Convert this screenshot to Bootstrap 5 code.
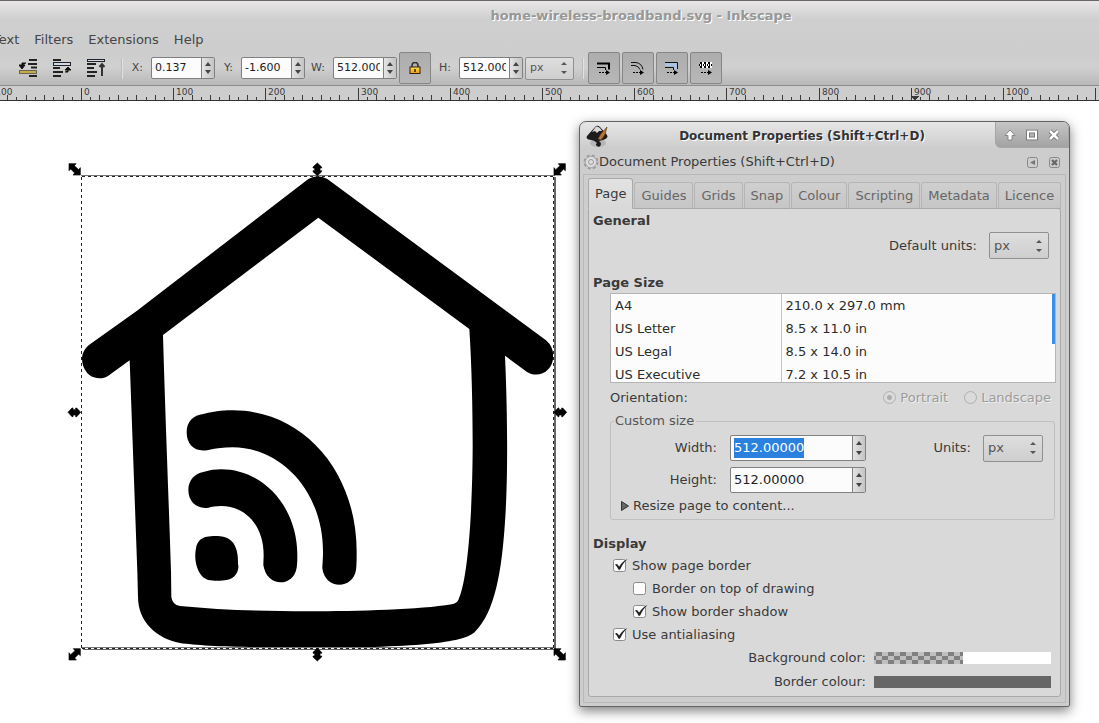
<!DOCTYPE html>
<html lang="en">
<head>
<meta charset="utf-8">
<meta name="viewport" content="width=device-width, initial-scale=1">
<title>home-wireless-broadband.svg - Inkscape</title>
<link href="https://cdn.jsdelivr.net/npm/bootstrap@5.3.0/dist/css/bootstrap.min.css" rel="stylesheet">
<style>
  body { font-family: "DejaVu Sans", sans-serif; font-size: 13px; line-height: 20px; color: #3a3a3a; background: #fff; overflow: hidden; }
  svg { display: block; }
  .chrome { border-top: 1px solid #666; background: linear-gradient(#e9e7e8 0, #cfcfcf 18px, #cdcdcd 52px, #d0d0d0 66px, #b8b8b8 84px); border-bottom: 1px solid #8c8c8c; }
  .window-title { padding: 5px 0 0 183px; height: 29px; color: #979797; font-weight: 700; text-shadow: 1px 1px 0 #fff; }
  .menus { height: 21px; margin-left: -7px; gap: 15px; }
  .menus a { color: #454545; text-decoration: none; }
  .tools { height: 34px; font-size: 11px; padding-left: 19px; }
  .tools .group { gap: 2px; }
  .tools label { text-align: right; color: #444; }
  .icon-btn { border: 0; background: none; padding: 0; width: 18px; height: 18px; }
  .tool-rule { width: 2px; height: 21px; background: linear-gradient(90deg, #bbb 50%, #e2e2e2 50%); }
  .toggle-btn { width: 32px; height: 32px; padding: 0; border: 1px solid #868686; border-radius: 2px; background: linear-gradient(#adadad, #b7b7b7); display: flex; align-items: center; justify-content: center; }
  .spin { border: 1px solid #808080; border-radius: 2px; background: #fcfcfc; overflow: hidden; height: 26px; width: 136px; }
  .spin input { border: 0; outline: 0; background: transparent; min-width: 0; width: 0; flex: 1 1 0; padding: 0 3px; color: #222; }
  .spin input::selection { background: #2a82de; color: #fff; }
  .spin .steps { width: 13px; padding: 2px 0; border-left: 1px solid #808080; background: linear-gradient(90deg, #e4e4e4, #c4c4c4); }
  .spin button { border: 0; padding: 0; background: none; flex: 1; display: flex; align-items: center; justify-content: center; }
  .tools .spin { width: 64px; height: 22px; }
  .unit-select { appearance: none; border: 1px solid #909090; border-radius: 2px; color: #555; width: 60px; height: 27px; padding: 0 4px;
    background: url("data:image/svg+xml,%3Csvg xmlns='http://www.w3.org/2000/svg' width='6' height='12'%3E%3Cpath d='M0 3L3 0L6 3zM0 9L3 12L6 9z' fill='%23555'/%3E%3C/svg%3E") no-repeat right 6px center, linear-gradient(#dedede, #cecece); }
  .tools .unit-select { width: 49px; height: 23px; }
  .ruler { height: 15px; background: #cdcdcd; border-bottom: 1px solid #333; overflow: hidden; }
  .canvas { min-height: 622px; }
  .drawing { left: 60px; top: 54px; }

  .props { right: 29px; top: 20px; width: 491px; border: 1px solid #636363; border-radius: 7px 7px 2px 2px; background: linear-gradient(#e6e6e6, #cdcdcd 26px); box-shadow: 0 4px 12px rgba(0,0,0,.5); padding: 0 3px 3px; }
  .props-title { height: 28px; margin-right: -3px; }
  .props-title strong { padding-top: 4px; font-size: 12px; text-shadow: 1px 1px 0 #fff; color: #333; }
  .win-btns { width: 74px; height: 26px; gap: 8px; border-radius: 0 6px 0 6px; background: linear-gradient(#c6c6c6, #a2a2a2); border: 1px solid #a6a6a6; border-top: 0; }
  .plain-btn { border: 0; background: none; padding: 0; color: inherit; }
  .dock-title { height: 24px; }
  .dock-frame { border: 1px solid #b9b9b9; padding: 3px 4px 5px; }
  .nav-tabs { border: 0; gap: 1px; align-items: flex-end; margin-bottom: -1px; position: relative; }
  .nav-tabs .nav-link { border: 1px solid #b5b5b5; border-radius: 3px 3px 0 0; margin: 0; padding: 3px 6px 2px; color: #666; background: linear-gradient(#cfcfcf, #c6c6c6); line-height: 20px; border-bottom-color: #a9a9a9; }
  .nav-tabs .nav-link.active { padding: 5px 6px 4px; background: linear-gradient(#e2e2e2, #d9d9d9); color: #3a3a3a; border-color: #a9a9a9 #a9a9a9 #d9d9d9; }
  .sheet { border: 1px solid #a9a9a9; border-radius: 0 3px 3px 3px; background: #d9d9d9; padding: 2px 4px; }
  .heading { font-size: 13px; line-height: 20px; font-weight: 700; margin: 0; color: #3a3a3a; }
  .heading + .units-line { padding: 1px 7px 0 0; }
  .section-gap { margin-top: 14px; }
  .sizes { margin: 0 0 3px 17px; height: 90px; border: 1px solid #b5b5b5; background: #fcfcfc; overflow: hidden; }
  .sizes table { color: #2c2c2c; width: 100%; }
  .sizes td { height: 23px; padding: 1px 4px 0; }
  .sizes td:first-child { width: 170px; border-right: 1px solid #c4c4c4; }
  .sizes .thumb { right: 0; top: 0; width: 3px; height: 50px; background: #3a8fe8; }
  .orient { margin: 0 5px 0 17px; height: 23px; }
  .off { color: #9c9c9c; text-shadow: 1px 1px 0 #eee; }
  .off input { appearance: none; width: 13px; height: 13px; margin: 0; border: 1px solid #b0b0b0; border-radius: 50%; background: #dadada; }
  .off input:checked { background: radial-gradient(#adadad 2px, #dadada 3px); }
  .custom { margin: 2px 1px 0 17px; border: 1px solid #c0c0c0; border-radius: 3px; padding: 0 11px 3px 10px; }
  .custom legend { float: none; width: auto; font-size: 13px; line-height: 20px; margin: 0 0 1px -7px; padding: 0 2px 0 1px; color: #555; }
  .custom .line { height: 32px; }
  .custom .lab { width: 109px; padding-right: 13px; text-align: right; flex: none; }
  .checks { margin-left: 20px; }
  .checks label { height: 23px; display: flex; align-items: center; gap: 4px; }
  .checks .nested { margin-left: 20px; }
  .checks input { appearance: none; width: 15px; height: 15px; margin: 0; flex: none; background: no-repeat center / 15px 15px url("data:image/svg+xml,%3Csvg xmlns='http://www.w3.org/2000/svg' viewBox='0 0 15 15'%3E%3Crect x='.5' y='1.5' width='12' height='12' rx='2' fill='%23fcfcfc' stroke='%238c8c8c'/%3E%3C/svg%3E"); }
  .checks input:checked { background-image: url("data:image/svg+xml,%3Csvg xmlns='http://www.w3.org/2000/svg' viewBox='0 0 15 15'%3E%3Crect x='.5' y='1.5' width='12' height='12' rx='2' fill='%23fcfcfc' stroke='%238c8c8c'/%3E%3Cpath d='M2 6.500L4 6L6.200 8.600C8.500 5 11 2.500 14.500 1C11 4 8.800 8 7 11.700L5.600 11.700C4.500 9.500 3.500 8 2 6.500z' fill='%23222'/%3E%3C/svg%3E"); }
  .colour-line { height: 24px; padding-right: 5px; }
  .swatch { width: 177px; height: 12px; border: 0; padding: 0; display: flex; background: #fff; }
  .swatch.solid { background: #666; }
  .swatch .checker { width: 50%; background: repeating-conic-gradient(#bfbfbf 0 25%, #808080 0 50%) 2px 0 / 12px 8px; }
</style>
</head>
<body class="d-flex flex-column min-vh-100">
<header class="chrome">
  <div class="window-title text-center">home-wireless-broadband.svg - Inkscape</div>
  <nav class="menus d-flex">
    <a href="#">Text</a><a href="#">Filters</a><a href="#">Extensions</a><a href="#">Help</a>
  </nav>
  <div class="tools d-flex align-items-center">
    <div class="d-flex gap-3">
      <button class="icon-btn" aria-label="Lower selection"><svg width="18" height="18"><path d="M10 1h8M9 5h9M12 8.500h6M10 17h8" stroke="#222" stroke-width="2"/><rect x=".5" y="11.500" width="17" height="3" fill="#c9a94a" stroke="#665"/><path d="M7 4H3v3M0 6l3 4 3-4z" stroke="#111" fill="#111"/></svg></button>
      <button class="icon-btn" aria-label="Raise selection"><svg width="18" height="18"><path d="M0 1h8M0 9h7M0 13h10M0 17h8" stroke="#222" stroke-width="2"/><rect x=".5" y="3.500" width="17" height="3" fill="#cfdbe8" stroke="#222"/><path d="M12 13h3v-2M12 11l3-3 3 3z" stroke="#111" fill="#111"/></svg></button>
      <button class="icon-btn" aria-label="Raise to top"><svg width="18" height="18"><path d="M0 5h9M0 9h7M0 13h10M0 17h8" stroke="#222" stroke-width="2"/><rect x=".5" y=".5" width="17" height="2" fill="#cfdbe8" stroke="#222"/><path d="M15 17V6M12.500 8L15 5l2.500 3" stroke="#333" stroke-width="2" fill="none"/></svg></button>
    </div>
    <span class="tool-rule ms-3 me-1"></span>
    <label for="fx" style="width:24px" class="pe-2">X:</label>
    <div class="spin d-flex"><input id="fx" value="0.137"><span class="steps d-flex flex-column"></span></div>
    <label for="fy" style="width:26px" class="pe-2">Y:</label>
    <div class="spin d-flex"><input id="fy" value="-1.600"><span class="steps d-flex flex-column"></span></div>
    <label for="fw" style="width:28px" class="pe-2">W:</label>
    <div class="spin d-flex"><input id="fw" value="512.000"><span class="steps d-flex flex-column"></span></div>
    <button class="toggle-btn" style="margin-left:2px" aria-label="Lock ratio"><svg width="12" height="12"><path d="M3 6V3.500a3 3 0 0 1 6 0V6" fill="none" stroke="#333" stroke-width="1.600"/><defs><linearGradient id="gold" x2="0" y2="1"><stop stop-color="#ffdf50"/><stop offset="1" stop-color="#f09a10"/></linearGradient></defs><rect x="1" y="5" width="10" height="6.500" fill="url(#gold)" stroke="#321"/><path d="M6 7v3" stroke="#321" stroke-width="1.500"/></svg></button>
    <label for="fh" style="width:28px" class="pe-2">H:</label>
    <div class="spin d-flex"><input id="fh" value="512.000"><span class="steps d-flex flex-column"></span></div>
    <select class="unit-select" aria-label="Unit" style="margin-left:2px"><option>px</option></select>
    <span class="tool-rule ms-2"></span>
    <div class="group d-flex ms-1">
      <button class="toggle-btn" aria-label="Scale stroke"><svg width="14" height="14"><path d="M0 2.500h12v6" fill="none" stroke="#000" stroke-width="2"/><path d="M0 6.500h8.500V9" fill="none" stroke="#000"/><path d="M2 11.500h7" stroke="#000" stroke-dasharray="2 1"/><path d="M9 9l4 2.500L9 14z"/></svg></button>
      <button class="toggle-btn" aria-label="Scale corners"><svg width="14" height="14"><path d="M0 1.500h5q6 1 7 7M0 4.500h4q4 1 5 4" fill="none" stroke="#111"/><path d="M2 11.500h7" stroke="#000" stroke-dasharray="2 1"/><path d="M9 9l4 2.500L9 14z"/></svg></button>
      <button class="toggle-btn" aria-label="Move gradients"><svg width="14" height="14"><path d="M0 1h13v7H9V5H0z" fill="#a9c4e6"/><path d="M0 1.500h12.500V8M0 6.500h8.500V9" fill="none" stroke="#111"/><path d="M2 11.500h7" stroke="#000" stroke-dasharray="2 1"/><path d="M9 9l4 2.500L9 14z"/></svg></button>
      <button class="toggle-btn" aria-label="Move patterns"><svg width="14" height="14"><path d="M1 1h12v6H1z" fill="#fff"/><path d="M1 2h12M1 6h12" stroke="#000" stroke-width="2" stroke-dasharray="2 2"/><path d="M0 4h13" stroke="#000" stroke-width="2" stroke-dasharray="1 1"/><path d="M2 11.500h7" stroke="#000" stroke-dasharray="2 1"/><path d="M9 9l4 2.500L9 14z"/></svg></button>
    </div>
  </div>
</header>
<div class="ruler"><svg id="ruler" width="100%" height="14" font-size="9" fill="#3a3a3a" shape-rendering="crispEdges"></svg></div>

<main class="canvas position-relative flex-grow-1">
  <svg class="drawing position-absolute" width="520" height="520" viewBox="0 0 1560 1560" role="img" aria-label="House with a broadband signal">
    <path fill-rule="evenodd" d="M745 72Q773 55 802 72L1458 556Q1480 575 1480 603C1479 650 1435 672 1400 650L1335 602C1342 760 1345 960 1335 1100C1325 1250 1305 1370 1245 1430C1215 1460 1100 1478 740 1478C550 1478 420 1473 360 1464C290 1450 234 1400 234 1325L232 1250L209 616L145 662C125 675 95 672 80 652C60 625 60 590 90 568L230 468ZM775 188L309 540C315 760 325 1000 333 1250L334 1325Q336 1348 360 1353C480 1365 620 1369 740 1369C900 1369 1080 1364 1175 1348Q1190 1345 1195 1335C1230 1260 1238 1000 1238 870C1238 760 1235 630 1228 522Z"/>
    <path d="M430 777C470 767 500 766 518 766C730 766 890 950 890 1190C890 1210 890 1235 888 1245C878 1305 795 1305 787 1240C787 1225 789 1215 789 1190C789 1010 665 877 518 877C490 877 470 880 445 885C405 893 380 870 380 832C380 800 400 780 430 777Z"/>
    <path d="M430 951C450 945 465 943 483 943C610 943 712 1055 712 1200C712 1215 712 1225 710 1238C700 1298 620 1298 610 1230C610 1220 611 1210 611 1200C611 1110 555 1053 483 1053C468 1053 455 1056 445 1058C410 1063 385 1040 385 1005C385 975 405 955 430 951Z"/>
    <path d="M440 1145C455 1142 480 1142 490 1145C525 1153 535 1185 534 1226C540 1245 525 1272 500 1275C485 1278 460 1278 445 1275C415 1267 400 1220 408 1180C411 1160 422 1149 440 1145Z"/>
    <g fill="none" stroke-width="3" shape-rendering="crispEdges">
      <path d="M64 61.500H1484M66 1477H1484" stroke="#777"/>
      <path d="M1485 66V1484M69 1483H1486" stroke="#666" stroke-width="4"/>
      <path d="M64.500 66V1480M1480.500 65V1480M64.500 1480.500H1480" stroke="#fff"/>
      <path d="M64.500 64.500H1480M64.500 66V1480M1480.500 66V1480M64.500 1480.500H1480" stroke="#222" stroke-dasharray="9 9"/>
    </g>
    <defs>
      <path id="diag" d="M-17-17H4L-1-11L12 1L17-5V17H-5L0 11L-12-1L-17 4Z"/>
      <path id="vert" d="M0-19L13-7V-4H8V4H13V7L0 19L-13 7V4H-8V-4H-13V-7Z"/>
    </defs>
    <g stroke="#000" stroke-width="2">
      <use href="#diag" x="44" y="43"/><use href="#diag" x="1499" y="1498"/>
      <use href="#diag" transform="translate(1499 43) scale(-1 1)"/><use href="#diag" transform="translate(44 1498) scale(-1 1)"/>
      <use href="#vert" x="772" y="43"/><use href="#vert" x="772" y="1499"/>
      <use href="#vert" transform="translate(43 772) rotate(90)"/><use href="#vert" transform="translate(1501 772) rotate(90)"/>
    </g>
  </svg>

  <section class="props position-absolute" aria-label="Document Properties">
    <div class="props-title d-flex">
      <svg width="26" height="27" viewBox="0 0 26 27"><ellipse cx="15" cy="21" rx="8" ry="4" fill="#999" opacity=".5"/><path d="M13 4Q15 3 17 5L24 13Q26 16 20 18L16 19Q20 22 16 25Q11 23 14 21Q11 18 8 18Q2 17 4 14Z" fill="#1c1c1c"/><path d="M13 4.500Q15 4 17 6L19 9L16 9L14 11L12 9L9 10Z" fill="#d8d8d8"/><path d="M15 17Q17 12 24 5Q23 13 18 18Z" fill="#b9763a" stroke="#5a3717" stroke-width=".6"/></svg>
      <strong class="flex-grow-1 text-center">Document Properties (Shift+Ctrl+D)</strong>
      <div class="win-btns d-flex justify-content-center align-items-center">
        <button class="plain-btn" aria-label="Roll up"><svg width="14" height="14"><path d="M7 2L12 7.500H9V12H5V7.500H2Z" fill="#fff" stroke="#777" stroke-width=".8"/></svg></button>
        <button class="plain-btn" aria-label="Maximise"><svg width="14" height="14"><path d="M3 3.500h8v7H3z" fill="none" stroke="#666" stroke-width="3.500"/><path d="M3 3.500h8v7H3z" fill="none" stroke="#fff" stroke-width="2"/></svg></button>
        <button class="plain-btn" aria-label="Close"><svg width="14" height="14"><path d="M3 3l8 8M11 3l-8 8" stroke="#666" stroke-width="4"/><path d="M3 3l8 8M11 3l-8 8" stroke="#fff" stroke-width="2.500"/></svg></button>
      </div>
    </div>
    <div class="dock-title d-flex align-items-center">
      <svg width="16" height="16" viewBox="-8 -8 16 16" fill="none" stroke="#999"><circle r="6.500" stroke-width="2" stroke-dasharray="3 2.100"/><circle r="5.600" fill="#ddd" stroke="#aaa"/><circle r="2.500"/></svg>
      <span class="flex-grow-1">Document Properties (Shift+Ctrl+D)</span>
      <button class="plain-btn me-2" aria-label="Iconify dock"><svg width="14" height="13"><rect x="1.500" y="1.500" width="10" height="10" rx="2" fill="none" stroke="#888"/><path d="M9 4v5L4 6.500z" fill="#777"/></svg></button>
      <button class="plain-btn me-1" aria-label="Close dock"><svg width="14" height="13"><rect x="1.500" y="1.500" width="10" height="10" rx="2" fill="none" stroke="#888"/><path d="M4 4l5 5M9 4l-5 5" stroke="#666" stroke-width="2.200"/></svg></button>
    </div>
    <div class="dock-frame">
      <div class="nav nav-tabs flex-nowrap" role="tablist">
        <button class="nav-link active" role="tab">Page</button><button class="nav-link" role="tab">Guides</button><button class="nav-link" role="tab">Grids</button><button class="nav-link" role="tab">Snap</button><button class="nav-link" role="tab">Colour</button><button class="nav-link" role="tab">Scripting</button><button class="nav-link" role="tab">Metadata</button><button class="nav-link" role="tab">Licence</button>
      </div>
      <div class="sheet">
        <h2 class="heading">General</h2>
        <div class="units-line d-flex justify-content-end align-items-center">
          <label for="du" class="me-2 pe-1">Default units:</label>
          <select id="du" class="unit-select"><option>px</option></select>
        </div>
        <h2 class="heading section-gap">Page Size</h2>
        <div class="sizes position-relative">
          <table>
            <tr><td>A4</td><td>210.0 x 297.0 mm</td></tr>
            <tr><td>US Letter</td><td>8.5 x 11.0 in</td></tr>
            <tr><td>US Legal</td><td>8.5 x 14.0 in</td></tr>
            <tr><td>US Executive</td><td>7.2 x 10.5 in</td></tr>
          </table>
          <span class="thumb position-absolute"></span>
        </div>
        <div class="orient d-flex align-items-center">
          <span class="me-auto">Orientation:</span>
          <label class="off d-flex align-items-center gap-1 me-3"><input type="radio" name="o" checked disabled>Portrait</label>
          <label class="off d-flex align-items-center gap-1"><input type="radio" name="o" disabled>Landscape</label>
        </div>
        <fieldset class="custom">
          <legend>Custom size</legend>
          <div class="line d-flex align-items-center">
            <label class="lab" for="pw">Width:</label>
            <div class="spin d-flex"><input id="pw" value="512.00000"><span class="steps d-flex flex-column"></span></div>
            <label class="ms-auto me-2 pe-1" for="pu">Units:</label>
            <select id="pu" class="unit-select"><option>px</option></select>
          </div>
          <div class="line d-flex align-items-center">
            <label class="lab" for="ph">Height:</label>
            <div class="spin d-flex"><input id="ph" value="512.00000"><span class="steps d-flex flex-column"></span></div>
          </div>
          <button class="plain-btn d-flex align-items-center gap-1"><svg width="8" height="11"><path d="M.5.5v9L7.500 5z" fill="#666" stroke="#333"/></svg>Resize page to content...</button>
        </fieldset>
        <h2 class="heading section-gap">Display</h2>
        <div class="checks">
          <label><input type="checkbox" checked>Show page border</label>
          <label class="nested"><input type="checkbox">Border on top of drawing</label>
          <label class="nested"><input type="checkbox" checked>Show border shadow</label>
          <label><input type="checkbox" checked>Use antialiasing</label>
        </div>
        <div class="colour-line d-flex justify-content-end align-items-center"><label for="bg" class="me-2">Background color:</label><button id="bg" class="swatch"><span class="checker h-100"></span></button></div>
        <div class="colour-line d-flex justify-content-end align-items-center"><label for="bc" class="me-2">Border colour:</label><button id="bc" class="swatch solid"></button></div>
      </div>
    </div>
  </section>
</main>
<script src="https://cdn.jsdelivr.net/npm/bootstrap@5.3.0/dist/js/bootstrap.bundle.min.js"></script>
<script>
  // Each spin box gets the same pair of stepper buttons.
  document.querySelectorAll('.steps').forEach(function (s) {
    s.innerHTML = '<button aria-label="Increase"><svg width="6" height="4"><path d="M0 4L3 0L6 4z" fill="#444"/></svg></button>' +
                  '<button aria-label="Decrease"><svg width="6" height="4"><path d="M0 0L3 4L6 0z" fill="#444"/></svg></button>';
  });
  // Ruler: one tick every 10 units, taller every 20, labelled every 100 where the label has room.
  var origin = 81, scale = 0.922, out = '', end = window.innerWidth;
  for (var u = -100; origin + u * scale < end; u += 10) {
    var x = Math.round(origin + u * scale), h = u % 100 === 0 ? 12 : u % 20 === 0 ? 5 : 3;
    out += '<rect x="' + x + '" y="' + (14 - h) + '" width="1" height="' + h + '"/>';
    if (u % 100 === 0 && x + 26 < end) out += '<text x="' + (x + 3) + '" y="9">' + u + '</text>';
  }
  out += '<path d="M910 10h9l-4 4z"/>';
  document.getElementById('ruler').innerHTML = out;
  var pw = document.getElementById('pw');
  pw.focus();
  pw.select();
</script>
</body>
</html>
